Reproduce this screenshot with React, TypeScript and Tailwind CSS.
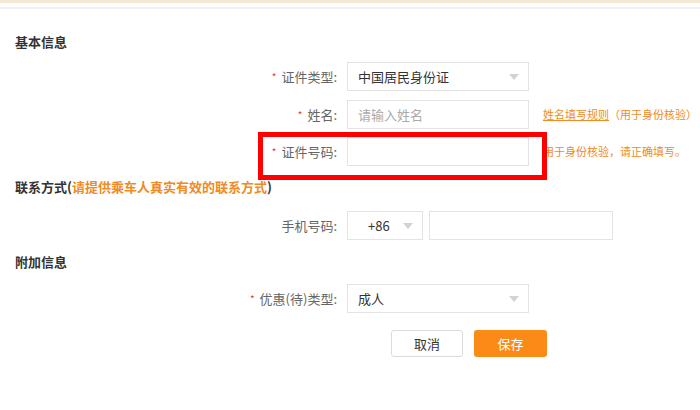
import React from "react";

const font = { fontFamily: '"Noto Sans CJK SC", "Noto Sans", sans-serif' };

function Arrow() {
  return (
    <svg width="10" height="6" viewBox="0 0 10 6" className="shrink-0">
      <path d="M0 0 L10 0 L5 6 Z" fill="#d3d3d3" />
    </svg>
  );
}

function Label({ text, required = true }: { text: string; required?: boolean }) {
  return (
    <div className="flex w-[347px] shrink-0 items-center justify-end pr-[10px] text-[13px] text-[#666]">
      {required && <span className="mr-[5px] text-[10px] leading-none text-[#e4393c]">*</span>}
      <span>{text}</span>
    </div>
  );
}

function Select({ value, width }: { value: string; width: string }) {
  return (
    <div
      className={`flex h-[29px] ${width} items-center justify-between border border-[#e3e3e3] bg-white pl-[10px] pr-[9px] text-[13px] text-[#333]`}
    >
      <span>{value}</span>
      <Arrow />
    </div>
  );
}

function Input({ placeholder, width = "w-[182px]" }: { placeholder?: string; width?: string }) {
  return (
    <div className={`flex h-[29px] ${width} items-center border border-[#e3e3e3] bg-white pl-[10px] text-[13px] text-[#aaa]`}>
      {placeholder}
    </div>
  );
}

function Heading({ children, className = "" }: { children: React.ReactNode; className?: string }) {
  return <div className={`pl-[15px] text-[13px] font-bold leading-[20px] text-[#333] ${className}`}>{children}</div>;
}

export default function App() {
  return (
    <div className="h-[410px] w-[700px] overflow-hidden bg-white" style={font}>
      <div className="h-[3px] bg-[#f6e8d6]" />
      <div className="mt-[4px] h-[2px] bg-[#f1f1f1]" />

      <Heading className="mt-[23px]">基本信息</Heading>

      <div className="mt-[10px] flex items-center">
        <Label text="证件类型:" />
        <Select value="中国居民身份证" width="w-[182px]" />
      </div>

      <div className="mt-[9px] flex items-center">
        <Label text="姓名:" />
        <Input placeholder="请输入姓名" />
        <div className="ml-[14px] text-[11px] text-[#f08a24]">
          <span className="underline">姓名填写规则</span>
          <span>（用于身份核验）</span>
        </div>
      </div>

      <div className="relative mt-[8px] flex items-center">
        <Label text="证件号码:" />
        <Input />
        <div className="ml-[14px] text-[11px] text-[#f08a24]">用于身份核验，请正确填写。</div>
        <div className="absolute left-[258px] top-[-5px] h-[48px] w-[289px] border-[5px] border-[#ff0000]" />
      </div>

      <Heading className="mt-[11px]">
        联系方式(<span className="text-[#f08a24]">请提供乘车人真实有效的联系方式</span>)
      </Heading>

      <div className="mt-[14px] flex items-center">
        <Label text="手机号码:" required={false} />
        <div className="flex h-[29px] w-[76px] items-center justify-between border border-[#e3e3e3] pl-[20px] pr-[9px] text-[13px] text-[#333]">
          <span>+86</span>
          <Arrow />
        </div>
        <div className="ml-[6px]">
          <Input width="w-[184px]" />
        </div>
      </div>

      <Heading className="mt-[12px]">附加信息</Heading>

      <div className="mt-[12px] flex items-center">
        <Label text="优惠(待)类型:" />
        <Select value="成人" width="w-[182px]" />
      </div>

      <div className="mt-[17px] flex pl-[391px]">
        <button className="flex h-[27px] w-[72px] items-center justify-center rounded-[3px] border border-[#dcdcdc] bg-white text-[13px] text-[#333]">
          取消
        </button>
        <button className="ml-[11px] flex h-[27px] w-[73px] items-center justify-center rounded-[3px] bg-[#fb8a16] text-[13px] text-white">
          保存
        </button>
      </div>
    </div>
  );
}
